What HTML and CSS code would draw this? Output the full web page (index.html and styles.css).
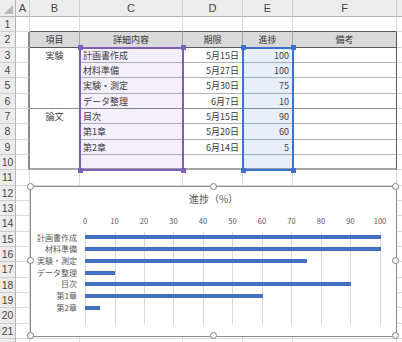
FILE: index.html
```html
<!DOCTYPE html>
<html lang="ja">
<head>
    <meta charset="UTF-8">
    <title>進捗表</title>
    <link rel="stylesheet" href="styles.css">
</head>
<body>
    <div class="sheet">
        <div class="corner"></div><div class="hd">A</div><div class="hd">B</div><div class="hd">C</div><div class="hd">D</div><div class="hd">E</div><div class="hd">F</div><div class="hd"></div>

        <div class="rn">1</div><div class="c"></div><div class="c tt"></div><div class="c tt"></div><div class="c tt"></div><div class="c tt"></div><div class="c tt"></div><div class="c"></div>
        <div class="rn">2</div><div class="c tl"></div><div class="c th">項目</div><div class="c th">詳細内容</div><div class="c th">期限</div><div class="c th">進捗</div><div class="c th tr">備考</div><div class="c"></div>

        <!-- 実験 -->
        <div class="rn">3</div><div class="c tl"></div><div class="c grp sep">実験</div><div class="c td">計画書作成</div><div class="c td num">5月15日</div><div class="c td num">100</div><div class="c td tr"></div><div class="c"></div>
        <div class="rn">4</div><div class="c tl"></div><div class="c td">材料準備</div><div class="c td num">5月27日</div><div class="c td num">100</div><div class="c td tr"></div><div class="c"></div>
        <div class="rn">5</div><div class="c tl"></div><div class="c td">実験・測定</div><div class="c td num">5月30日</div><div class="c td num">75</div><div class="c td tr"></div><div class="c"></div>
        <div class="rn">6</div><div class="c tl"></div><div class="c td sep">データ整理</div><div class="c td num sep">6月7日</div><div class="c td num sep">10</div><div class="c td tr sep"></div><div class="c"></div>

        <!-- 論文 -->
        <div class="rn">7</div><div class="c tl"></div><div class="c grp end">論文</div><div class="c td">目次</div><div class="c td num">5月15日</div><div class="c td num">90</div><div class="c td tr"></div><div class="c"></div>
        <div class="rn">8</div><div class="c tl"></div><div class="c td">第1章</div><div class="c td num">5月20日</div><div class="c td num">60</div><div class="c td tr"></div><div class="c"></div>
        <div class="rn">9</div><div class="c tl"></div><div class="c td">第2章</div><div class="c td num">6月14日</div><div class="c td num">5</div><div class="c td tr"></div><div class="c"></div>
        <div class="rn">10</div><div class="c tl"></div><div class="c td end"></div><div class="c td end"></div><div class="c td end"></div><div class="c td tr end"></div><div class="c"></div>

        <div class="rn">11</div><div class="c"></div><div class="c"></div><div class="c"></div><div class="c"></div><div class="c"></div><div class="c"></div><div class="c"></div>
        <div class="rn">12</div><div class="c"></div><div class="c"></div><div class="c"></div><div class="c"></div><div class="c"></div><div class="c"></div><div class="c"></div>
        <div class="rn">13</div><div class="c"></div><div class="c"></div><div class="c"></div><div class="c"></div><div class="c"></div><div class="c"></div><div class="c"></div>
        <div class="rn">14</div><div class="c"></div><div class="c"></div><div class="c"></div><div class="c"></div><div class="c"></div><div class="c"></div><div class="c"></div>
        <div class="rn">15</div><div class="c"></div><div class="c"></div><div class="c"></div><div class="c"></div><div class="c"></div><div class="c"></div><div class="c"></div>
        <div class="rn">16</div><div class="c"></div><div class="c"></div><div class="c"></div><div class="c"></div><div class="c"></div><div class="c"></div><div class="c"></div>
        <div class="rn">17</div><div class="c"></div><div class="c"></div><div class="c"></div><div class="c"></div><div class="c"></div><div class="c"></div><div class="c"></div>
        <div class="rn">18</div><div class="c"></div><div class="c"></div><div class="c"></div><div class="c"></div><div class="c"></div><div class="c"></div><div class="c"></div>
        <div class="rn">19</div><div class="c"></div><div class="c"></div><div class="c"></div><div class="c"></div><div class="c"></div><div class="c"></div><div class="c"></div>
        <div class="rn">20</div><div class="c"></div><div class="c"></div><div class="c"></div><div class="c"></div><div class="c"></div><div class="c"></div><div class="c"></div>
        <div class="rn">21</div><div class="c"></div><div class="c"></div><div class="c"></div><div class="c"></div><div class="c"></div><div class="c"></div><div class="c"></div>
        <div class="rn">22</div><div class="c"></div><div class="c"></div><div class="c"></div><div class="c"></div><div class="c"></div><div class="c"></div><div class="c"></div>

        <!-- selections -->
        <div class="sel sel-c"><i class="k k1"></i><i class="k k2"></i><i class="k k3"></i><i class="k k4"></i></div>
        <div class="sel sel-e"><i class="k k1"></i><i class="k k2"></i><i class="k k3"></i><i class="k k4"></i></div>

        <!-- chart -->
        <div class="chart">
            <div class="chart-title">進捗（%）</div>
            <div class="axis">
                <span>0</span><span>10</span><span>20</span><span>30</span><span>40</span><span>50</span><span>60</span><span>70</span><span>80</span><span>90</span><span>100</span>
            </div>
            <div class="plot">
                <div class="labels">
                    <div>計画書作成</div>
                    <div>材料準備</div>
                    <div>実験・測定</div>
                    <div>データ整理</div>
                    <div>目次</div>
                    <div>第1章</div>
                    <div>第2章</div>
                    <div></div>
                </div>
                <div class="bars">
                    <div class="brow"><div class="bar" style="width:100%"></div></div>
                    <div class="brow"><div class="bar" style="width:100%"></div></div>
                    <div class="brow"><div class="bar" style="width:75%"></div></div>
                    <div class="brow"><div class="bar" style="width:10%"></div></div>
                    <div class="brow"><div class="bar" style="width:90%"></div></div>
                    <div class="brow"><div class="bar" style="width:60%"></div></div>
                    <div class="brow"><div class="bar" style="width:5%"></div></div>
                    <div class="brow"></div>
                </div>
            </div>
            <i class="hdl" style="left:0;top:0"></i>
            <i class="hdl" style="left:50%;top:0"></i>
            <i class="hdl" style="left:100%;top:0"></i>
            <i class="hdl" style="left:0;top:50%"></i>
            <i class="hdl" style="left:100%;top:50%"></i>
            <i class="hdl" style="left:0;top:100%"></i>
            <i class="hdl" style="left:50%;top:100%"></i>
            <i class="hdl" style="left:100%;top:100%"></i>
        </div>
    </div>
</body>
</html>
```

FILE: styles.css
```css
html, body {
    margin: 0;
    padding: 0;
    overflow: hidden;
    background: #fff;
}
body {
    font-family: "Noto Sans CJK JP", "Noto Sans", sans-serif;
    color: #3a3a3a;
}
.sheet {
    position: relative;
    display: grid;
    grid-template-columns: 16px 14px 50px 103px 60px 50px 104px 30px;
    grid-template-rows: 17px repeat(22, 15.33px);
}
.sheet > div {
    box-sizing: border-box;
}
.c {
    border-right: 1px solid #dadada;
    border-bottom: 1px solid #dadada;
    font-size: 9px;
    line-height: 14px;
    padding: 1px 3px 0;
    white-space: nowrap;
    overflow: hidden;
}
.corner, .hd, .rn {
    background: #ececec;
    border-right: 1px solid #cdcdcd;
    border-bottom: 1px solid #cdcdcd;
    color: #444;
    font-family: "Liberation Sans", "Noto Sans", sans-serif;
    font-size: 11px;
    display: flex;
    align-items: center;
    justify-content: center;
}
.hd {
    border-bottom-color: #b4b4b4;
}
.rn {
    border-right-color: #b4b4b4;
    font-size: 10.5px;
}
.corner {
    position: relative;
    border-right-color: #b4b4b4;
    border-bottom-color: #b4b4b4;
}
.corner::after {
    content: "";
    position: absolute;
    right: 2px;
    bottom: 2px;
    border-left: 9px solid transparent;
    border-bottom: 9px solid #b9b9b9;
}

/* table */
.tt {
    border-bottom-color: #595959;
}
.tl {
    border-right: 2px solid #8a8a8a;
}
.th {
    background: #d9d9d9;
    border-right-color: #a6a6a6;
    border-bottom-color: #595959;
    text-align: center;
}
.td {
    border-right-color: #b4b4b4;
    border-bottom-color: #b4b4b4;
}
.tr {
    border-right-color: #595959;
}
.num {
    text-align: right;
}
.grp {
    grid-row: span 4;
    text-align: center;
    border-right-color: #b4b4b4;
}
.sep {
    border-bottom-color: #8a8a8a;
}
.end {
    border-bottom: 2px solid #a6a6a6;
}

/* selections */
.sel {
    position: absolute;
    top: -1px;
    left: -1px;
    right: -1px;
    bottom: -1px;
    border: 2px solid;
    grid-row: 4 / 12;
}
.sel-c {
    grid-column: 4 / 5;
    border-color: #7f5dbb;
    background: rgba(112, 64, 176, 0.08);
}
.sel-e {
    grid-column: 6 / 7;
    border-color: #3b6fd0;
    background: rgba(68, 114, 196, 0.12);
}
.k {
    position: absolute;
    width: 5px;
    height: 5px;
}
.sel-c .k { background: #7f5dbb; }
.sel-e .k { background: #3b6fd0; }
.k1 { left: -3.5px; top: -3.5px; }
.k2 { right: -3.5px; top: -3.5px; }
.k3 { left: -3.5px; bottom: -3.5px; }
.k4 { right: -3.5px; bottom: -3.5px; }

/* chart */
.chart {
    position: absolute;
    grid-column: 3 / 8;
    grid-row: 13 / 23;
    top: 0;
    left: 0;
    right: 0;
    height: 151px;
    box-sizing: border-box;
    border: 1px solid #8c8c8c;
    background: #fff;
    color: #595959;
}
.chart-title {
    margin-top: 5px;
    height: 14px;
    line-height: 14px;
    font-size: 10px;
    text-align: center;
}
.axis {
    display: flex;
    justify-content: space-between;
    box-sizing: border-box;
    width: 295px;
    height: 26px;
    margin-left: 54px;
    padding-top: 10px;
    font-size: 7.5px;
    line-height: 10px;
}
.axis span {
    width: 0;
    display: flex;
    justify-content: center;
    white-space: nowrap;
}
.plot {
    display: flex;
}
.labels {
    width: 54px;
    box-sizing: border-box;
    padding-right: 8px;
    text-align: right;
    font-size: 8px;
    white-space: nowrap;
}
.labels div {
    height: 11.7px;
    line-height: 11.7px;
}
.bars {
    width: 296px;
    background: repeating-linear-gradient(to right, #d9d9d9 0 1px, transparent 1px 29.5px);
}
.brow {
    height: 11.7px;
    display: flex;
    align-items: center;
}
.bar {
    height: 4px;
    background: #4472c4;
    box-shadow: inset 0 0 0 0.5px #3d66b0;
}
.hdl {
    position: absolute;
    width: 7px;
    height: 7px;
    margin: -4px 0 0 -4px;
    box-sizing: border-box;
    border: 1px solid #7f7f7f;
    border-radius: 50%;
    background: #fff;
}
```
